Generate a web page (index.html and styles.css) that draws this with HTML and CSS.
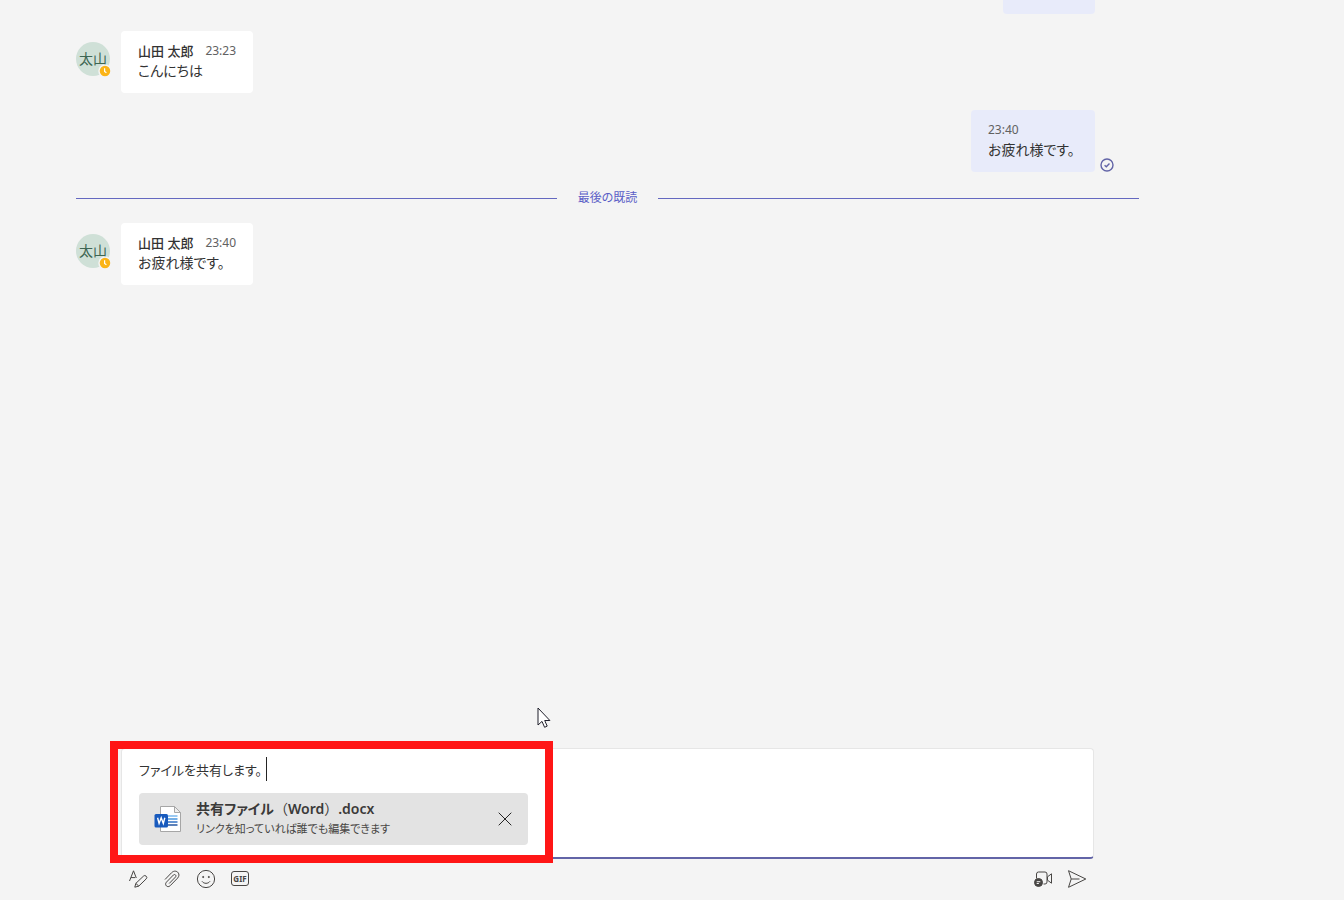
FILE: index.html
```html
<!DOCTYPE html>
<html lang="ja">
<head>
    <meta charset="UTF-8">
    <meta name="viewport" content="width=device-width, initial-scale=1.0">
    <title>チャット</title>
    <link rel="stylesheet" href="styles.css">
</head>
<body>

<main class="chat">
    <div class="messages">
        <div class="message own">
            <div class="bubble cut"></div>
        </div>

        <div class="message">
            <div class="avatar">太山
                <svg class="status" viewBox="0 0 14 14"><circle cx="7" cy="7" r="6" fill="#fbb417" stroke="#f4f4f4" stroke-width="1.5"/><path d="M6.6 4.2v3.2l1.8 1.3" fill="none" stroke="#fff" stroke-width="1.2"/></svg>
            </div>
            <div class="bubble">
                <div class="meta"><span class="name">山田 太郎</span><span class="time">23:23</span></div>
                <p>こんにちは</p>
            </div>
        </div>

        <div class="message own">
            <div class="bubble">
                <div class="meta"><span class="time">23:40</span></div>
                <p>お疲れ様です。</p>
            </div>
            <svg class="receipt" viewBox="0 0 14 14" fill="none" stroke="#6264a7"><circle cx="7" cy="7" r="6" stroke-width="1.4"/><path d="M4.6 7.2l1.7 1.6 3.2-3.3" stroke-width="1.4"/></svg>
        </div>

        <div class="divider"><span>最後の既読</span></div>

        <div class="message">
            <div class="avatar">太山
                <svg class="status" viewBox="0 0 14 14"><circle cx="7" cy="7" r="6" fill="#fbb417" stroke="#f4f4f4" stroke-width="1.5"/><path d="M6.6 4.2v3.2l1.8 1.3" fill="none" stroke="#fff" stroke-width="1.2"/></svg>
            </div>
            <div class="bubble">
                <div class="meta"><span class="name">山田 太郎</span><span class="time">23:40</span></div>
                <p>お疲れ様です。</p>
            </div>
        </div>
    </div>

    <div class="composer">
        <div class="compose-box">
            <input class="compose-input" type="text" aria-label="新しいメッセージ" value="ファイルを共有します。">

            <div class="attachment">
                <svg class="word-icon" viewBox="0 0 28 28">
                    <path d="M6.5 1.5h14l6 6v19h-20z" fill="#fff" stroke="#a6a6a6"/>
                    <path d="M20.5 1.5v6h6z" fill="#eee" stroke="#a6a6a6"/>
                    <path d="M14 11h9.5" stroke="#70b4ee" stroke-width="1.4"/>
                    <path d="M14 14h9.5" stroke="#3b8fdb" stroke-width="1.4"/>
                    <path d="M14 17h9.5" stroke="#2368c0" stroke-width="1.4"/>
                    <path d="M14 20h9.5" stroke="#184b9b" stroke-width="1.4"/>
                    <rect x="0.5" y="9" width="13.5" height="13.5" rx="1.5" fill="#185abd"/>
                    <path d="M3.6 12.8l1.5 5.6 2.1-5.6 2.1 5.6 1.5-5.6" fill="none" stroke="#fff" stroke-width="1.4"/>
                </svg>
                <div class="file">
                    <div class="file-name">共有ファイル<span class="wide">（</span>Word<span class="wide">）</span>.docx</div>
                    <div class="file-access">リンクを知っていれば誰でも編集できます</div>
                </div>
                <button class="remove-btn" aria-label="削除">
                    <svg viewBox="0 0 14 14" width="14" height="14"><path d="M.7.7l12.6 12.6M13.3.7L.7 13.3"/></svg>
                </button>
            </div>
        </div>

        <div class="toolbar">
            <button aria-label="書式">
                <svg viewBox="0 0 20 20"><path d="M1.5 12L5.5 1.8 8.3 9M3 8.6h4.2M6.8 18.2l1-3.8 7.6-7.2a1.9 1.9 0 0 1 2.8 2.7l-7.4 7.2zM7.8 14.4l3 2.7"/></svg>
            </button>
            <button aria-label="添付">
                <svg viewBox="0 0 20 20"><path d="M3 10.5l6.6-6.8c4.2-4.2 10 1 6 5.4l-7.4 7.6c-2.6 2.6-6.2-.8-3.8-3.5l7-7.2c1.4-1.4 3.4.5 2.1 2l-6.3 6.5"/></svg>
            </button>
            <button aria-label="絵文字">
                <svg viewBox="0 0 20 20"><circle cx="10" cy="10" r="8.6"/><path d="M6 12.3c1.9 2.7 6.1 2.7 8 0"/><circle cx="7.2" cy="8" r=".6" fill="#484644"/><circle cx="12.8" cy="8" r=".6" fill="#484644"/></svg>
            </button>
            <button aria-label="GIF"><span class="gif">GIF</span></button>
            <button class="video-btn" aria-label="ビデオクリップ">
                <svg viewBox="0 0 20 20"><path d="M3.5 9.5V5a2 2 0 0 1 2-2H12a2 2 0 0 1 2 2v8a2 2 0 0 1-2 2h-1.5M14.5 7.8l4-3v9.4l-4-3z"/><circle cx="5.5" cy="13.5" r="4" fill="#484644"/><path d="M3.7 12.7h3.6M3.7 14.5h2.2" stroke="#f4f4f4"/></svg>
            </button>
            <button aria-label="送信">
                <svg viewBox="0 0 20 20"><path d="M1.5 1.7L18.8 10 1.5 18.3 4.2 10zM4.2 10h8.3"/></svg>
            </button>
        </div>

        <div class="highlight"></div>
        <svg class="pointer" viewBox="0 0 14 22"><path d="M1 1v17l4-3.6L7.6 20.3l2.6-1.2-2.5-5.6h5.2z" fill="#fff" stroke="#1f1f2b"/></svg>
    </div>
</main>

</body>
</html>
```

FILE: styles.css
```css
* {
    box-sizing: border-box;
}

body {
    margin: 0;
    background-color: #f4f4f4;
    color: #333;
    font-family: "Noto Sans", "Noto Sans CJK JP", sans-serif;
    font-size: 14px;
    font-feature-settings: "palt";
}

p {
    margin: 0;
}

button {
    display: flex;
    justify-content: center;
    align-items: center;
    padding: 0;
    border: none;
    background: none;
    cursor: pointer;
}

.chat {
    display: flex;
    flex-direction: column;
    height: 100vh;
    padding: 0 205px 0 76px;
}

/* Messages */
.messages {
    flex: 1;
    overflow: hidden;
}

.message {
    display: flex;
    gap: 11px;
    margin-bottom: 17px;
}

.message.own {
    justify-content: flex-end;
    align-items: flex-end;
    gap: 5px;
    padding-right: 25px;
}

.bubble {
    min-width: 124px;
    padding: 10px 17px 13px;
    border-radius: 4px;
    background-color: #fff;
}

.own .bubble {
    background-color: #e8ebfa;
}

/* scrolled almost out of view */
.own .bubble.cut {
    min-width: 92px;
    height: 14px;
    margin-right: 19px;
    padding: 0;
    border-radius: 0 0 4px 4px;
}

.meta {
    display: flex;
    gap: 12px;
    font-size: 12px;
    line-height: 20px;
}

.name {
    font-size: 13px;
    font-weight: 500;
}

.time {
    color: #616161;
}

.bubble p {
    line-height: 19px;
}

.avatar {
    position: relative;
    width: 34px;
    height: 34px;
    margin-top: 11px;
    border-radius: 50%;
    background-color: #cfe0d7;
    color: #3d6653;
    line-height: 34px;
    text-align: center;
    white-space: nowrap;
}

.status {
    position: absolute;
    right: -2px;
    bottom: -2px;
    width: 14px;
    height: 14px;
}

.receipt {
    width: 14px;
    height: 14px;
}

.divider {
    display: flex;
    align-items: center;
    gap: 21px;
    margin: 17px 0 16px;
    color: #5b5fc7;
    font-size: 12px;
    line-height: 18px;
}

.divider::before,
.divider::after {
    content: "";
    flex: 1;
    height: 1px;
    background-color: #6468c0;
}

/* Composer */
.composer {
    position: relative;
    margin: 0 45px;
}

.compose-box {
    padding: 8px 17px 12px;
    border: 1px solid #e6e6e6;
    border-bottom: 2px solid #6264a7;
    border-radius: 4px;
    background-color: #fff;
}

.compose-input {
    display: block;
    width: 128px;
    height: 24px;
    margin-bottom: 12px;
    padding: 0;
    border: none;
    border-right: 1px solid #242424;
    outline: none;
    background: none;
    color: inherit;
    font: inherit;
    font-size: 13px;
    font-feature-settings: inherit;
}

.attachment {
    display: flex;
    align-items: center;
    max-width: 389px;
    height: 52px;
    padding: 0 16px 0 15px;
    border-radius: 4px;
    background-color: #e3e3e3;
}

.word-icon {
    width: 28px;
    height: 28px;
    margin-right: 14px;
}

.file {
    flex: 1;
}

.file-name {
    font-size: 14px;
    font-weight: 600;
    line-height: 20px;
    color: #3b3a39;
}

.wide {
    font-weight: 400;
    font-feature-settings: normal;
}

.file-access {
    font-size: 11px;
    line-height: 20px;
    color: #484644;
}

.remove-btn svg {
    fill: none;
    stroke: #242424;
}

.toolbar {
    display: flex;
    align-items: center;
    height: 41px;
    padding-bottom: 2px;
}

.toolbar button {
    width: 34px;
    height: 34px;
}

.toolbar svg {
    width: 20px;
    height: 20px;
    fill: none;
    stroke: #484644;
    stroke-linejoin: round;
}

.gif {
    width: 18px;
    border: 1px solid #484644;
    border-radius: 3px;
    color: #484644;
    font-family: "Noto Sans", sans-serif;
    font-size: 8px;
    font-weight: 700;
    line-height: 13px;
}

.toolbar .video-btn {
    margin-left: auto;
}

.highlight {
    position: absolute;
    top: -7px;
    left: -11px;
    width: 443px;
    height: 122px;
    border: 8px solid #ff1616;
    pointer-events: none;
}

.pointer {
    position: absolute;
    top: -41px;
    left: 416px;
    width: 14px;
    height: 22px;
    pointer-events: none;
}
```
